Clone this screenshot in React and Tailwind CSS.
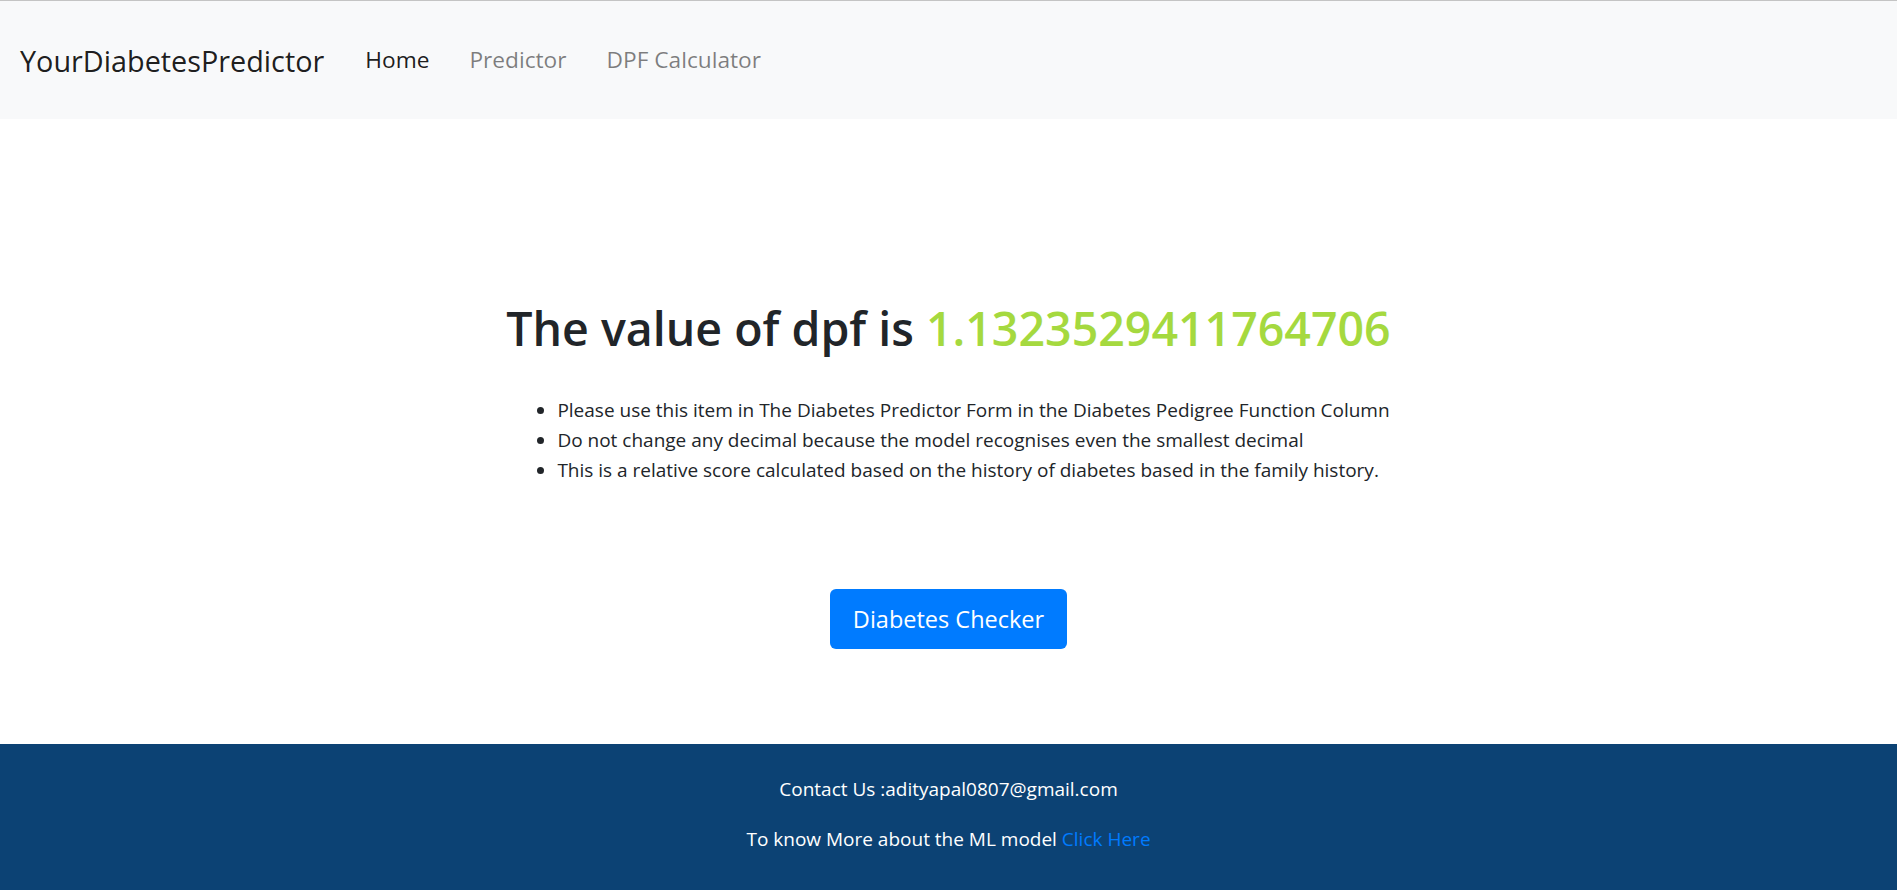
import React from 'react';

const navLinks = [
  { label: 'Home', active: true },
  { label: 'Predictor', active: false },
  { label: 'DPF Calculator', active: false }
];

const notes = [
  'Please use this item in The Diabetes Predictor Form in the Diabetes Pedigree Function Column',
  'Do not change any decimal because the model recognises even the smallest decimal',
  'This is a relative score calculated based on the history of diabetes based in the family history.'
];

const App = () => {
  return (
    <div className="min-h-screen flex flex-col bg-white text-[#212529] font-['Open_Sans',sans-serif]">
      {/* Navbar */}
      <nav className="h-[119px] shrink-0 border-t border-[#c4c4c4] bg-[#f8f9fa] flex items-center pl-[20px]">
        <a href="#" className="text-[28.8px] leading-[45px] text-black/90 mr-[21px]">
          YourDiabetesPredictor
        </a>
        <ul className="flex items-center">
          {navLinks.map((link) => (
            <li key={link.label}>
              <a
                href="#"
                className={
                  link.active
                    ? 'block px-[20px] text-[22.7px] leading-[36px] text-black/90'
                    : 'block px-[20px] text-[22.7px] leading-[36px] text-black/50'
                }
              >
                {link.label}
              </a>
            </li>
          ))}
        </ul>
      </nav>

      {/* Main content */}
      <main className="flex-1 flex flex-col items-center pt-[179px]">
        <h1 className="text-[46.5px] leading-[60px] font-semibold">
          The value of dpf is <span className="text-[#a5d93f]">1.1323529411764706</span>
        </h1>
        <ul className="mt-[37px] list-disc pl-[50px] text-[19px] leading-[30px]">
          {notes.map((note) => (
            <li key={note}>{note}</li>
          ))}
        </ul>
        <button className="mt-[104px] h-[60px] px-[23px] rounded-[6px] bg-[#007bff] text-white text-[23.5px] leading-[37px]">
          Diabetes Checker
        </button>
      </main>

      {/* Footer */}
      <footer className="h-[146px] shrink-0 bg-[#0c4274] text-white text-center text-[19px] leading-[30px] pt-[30px]">
        <p className="mb-[20px]">Contact Us :adityapal0807@gmail.com</p>
        <p>
          To know More about the ML model <a href="#" className="text-[#007bff]">Click Here</a>
        </p>
      </footer>
    </div>
  );
};

export default App;
